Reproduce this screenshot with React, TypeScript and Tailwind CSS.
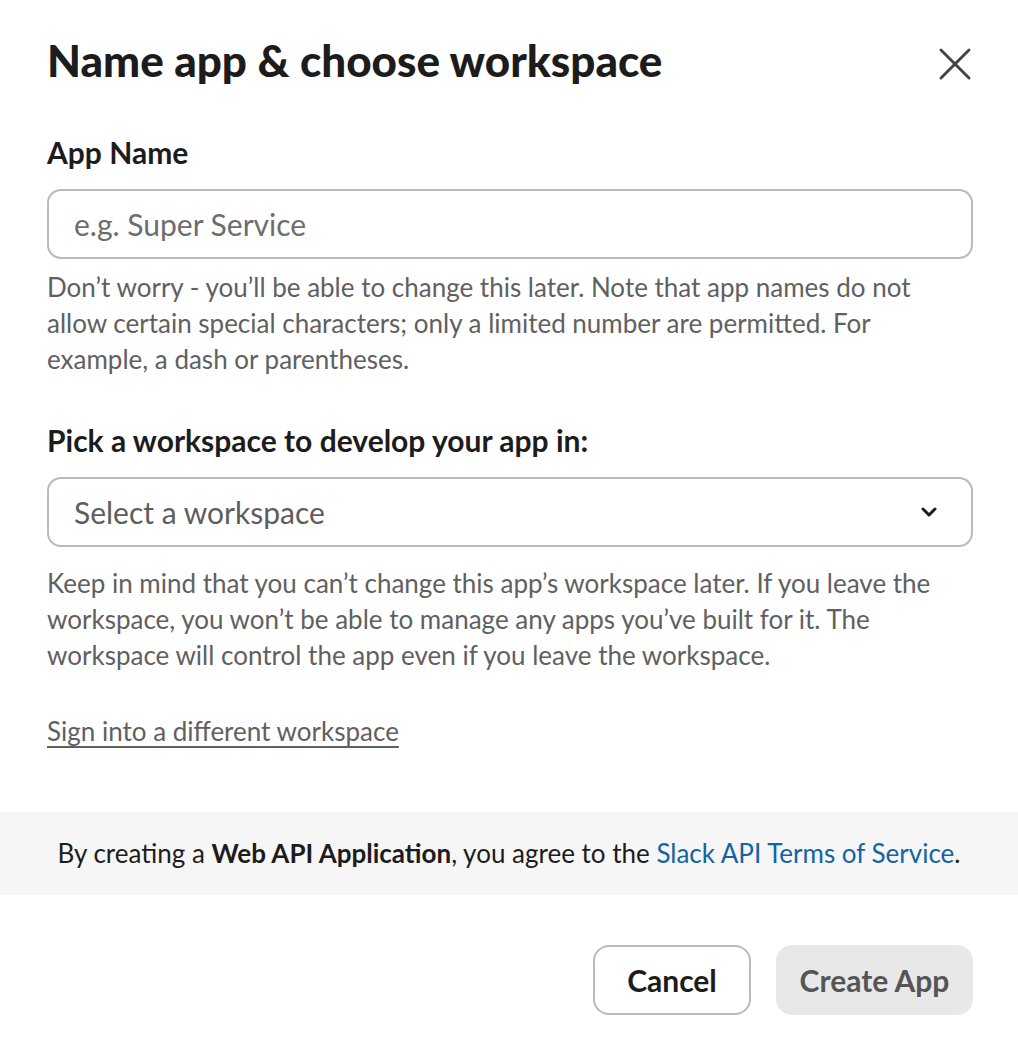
import { X, ChevronDown } from "lucide-react";

function App() {
  return (
    <div className="min-h-[1054px] w-[1018px] bg-white font-['Lato','Liberation_Sans',sans-serif] text-[#1d1c1d]">
      <div className="pl-[47px] pr-[45px] pt-[32px]">
        <div className="flex h-[56px] items-center justify-between">
          <h1 className="text-[44px] font-black leading-[56px]">
            Name app &amp; choose workspace
          </h1>
          <button type="button" className="-mr-[10px] h-[56px] translate-y-[4px] text-[#454245]">
            <X size={56} strokeWidth={1.25} />
          </button>
        </div>

        <label className="mt-[42px] block text-[30px] font-bold leading-[44px]">
          App Name
        </label>
        <div className="mt-[15px] flex h-[70px] items-center rounded-[14px] border-2 border-[#bbbabb] px-[25px]">
          <span className="text-[30px] text-[#6e6d6e]">e.g. Super Service</span>
        </div>
        <p className="mt-[10px] text-[26px] leading-[36px] text-[#616061]">
          Don’t worry - you’ll be able to change this later. Note that app names do not
          allow certain special characters; only a limited number are permitted. For
          example, a dash or parentheses.
        </p>

        <label className="mt-[41px] block text-[30px] font-bold leading-[44px]">
          Pick a workspace to develop your app in:
        </label>
        <div className="mt-[15px] flex h-[70px] items-center justify-between rounded-[14px] border-2 border-[#bbbabb] pl-[25px] pr-[30px]">
          <span className="text-[30px] text-[#5e5d5e]">Select a workspace</span>
          <ChevronDown size={24} strokeWidth={3} className="text-[#1d1c1d]" />
        </div>
        <p className="mt-[18px] text-[26px] leading-[36px] text-[#616061]">
          Keep in mind that you can’t change this app’s workspace later. If you leave the
          workspace, you won’t be able to manage any apps you’ve built for it. The
          workspace will control the app even if you leave the workspace.
        </p>

        <a
          href="#"
          className="mt-[40px] inline-block text-[26px] leading-[36px] text-[#616061] underline underline-offset-[5px]"
        >
          Sign into a different workspace
        </a>
      </div>

      <div className="mt-[63px] flex h-[83px] items-center justify-center bg-[#f6f6f6] text-[26px]">
        <span>
          By creating a <b className="font-bold">Web API Application</b>, you agree to the{" "}
          <a href="#" className="text-[#1264a3]">
            Slack API Terms of Service
          </a>
          .
        </span>
      </div>

      <div className="mt-[50px] flex justify-end gap-[25px] px-[45px]">
        <button
          type="button"
          className="h-[70px] w-[158px] rounded-[16px] border-2 border-[#bbbabb] bg-white text-[30px] font-bold"
        >
          Cancel
        </button>
        <button
          type="button"
          className="h-[70px] w-[197px] rounded-[16px] bg-[#e8e8e8] text-[30px] font-bold text-[#565556]"
        >
          Create App
        </button>
      </div>
    </div>
  );
}

export default App;
